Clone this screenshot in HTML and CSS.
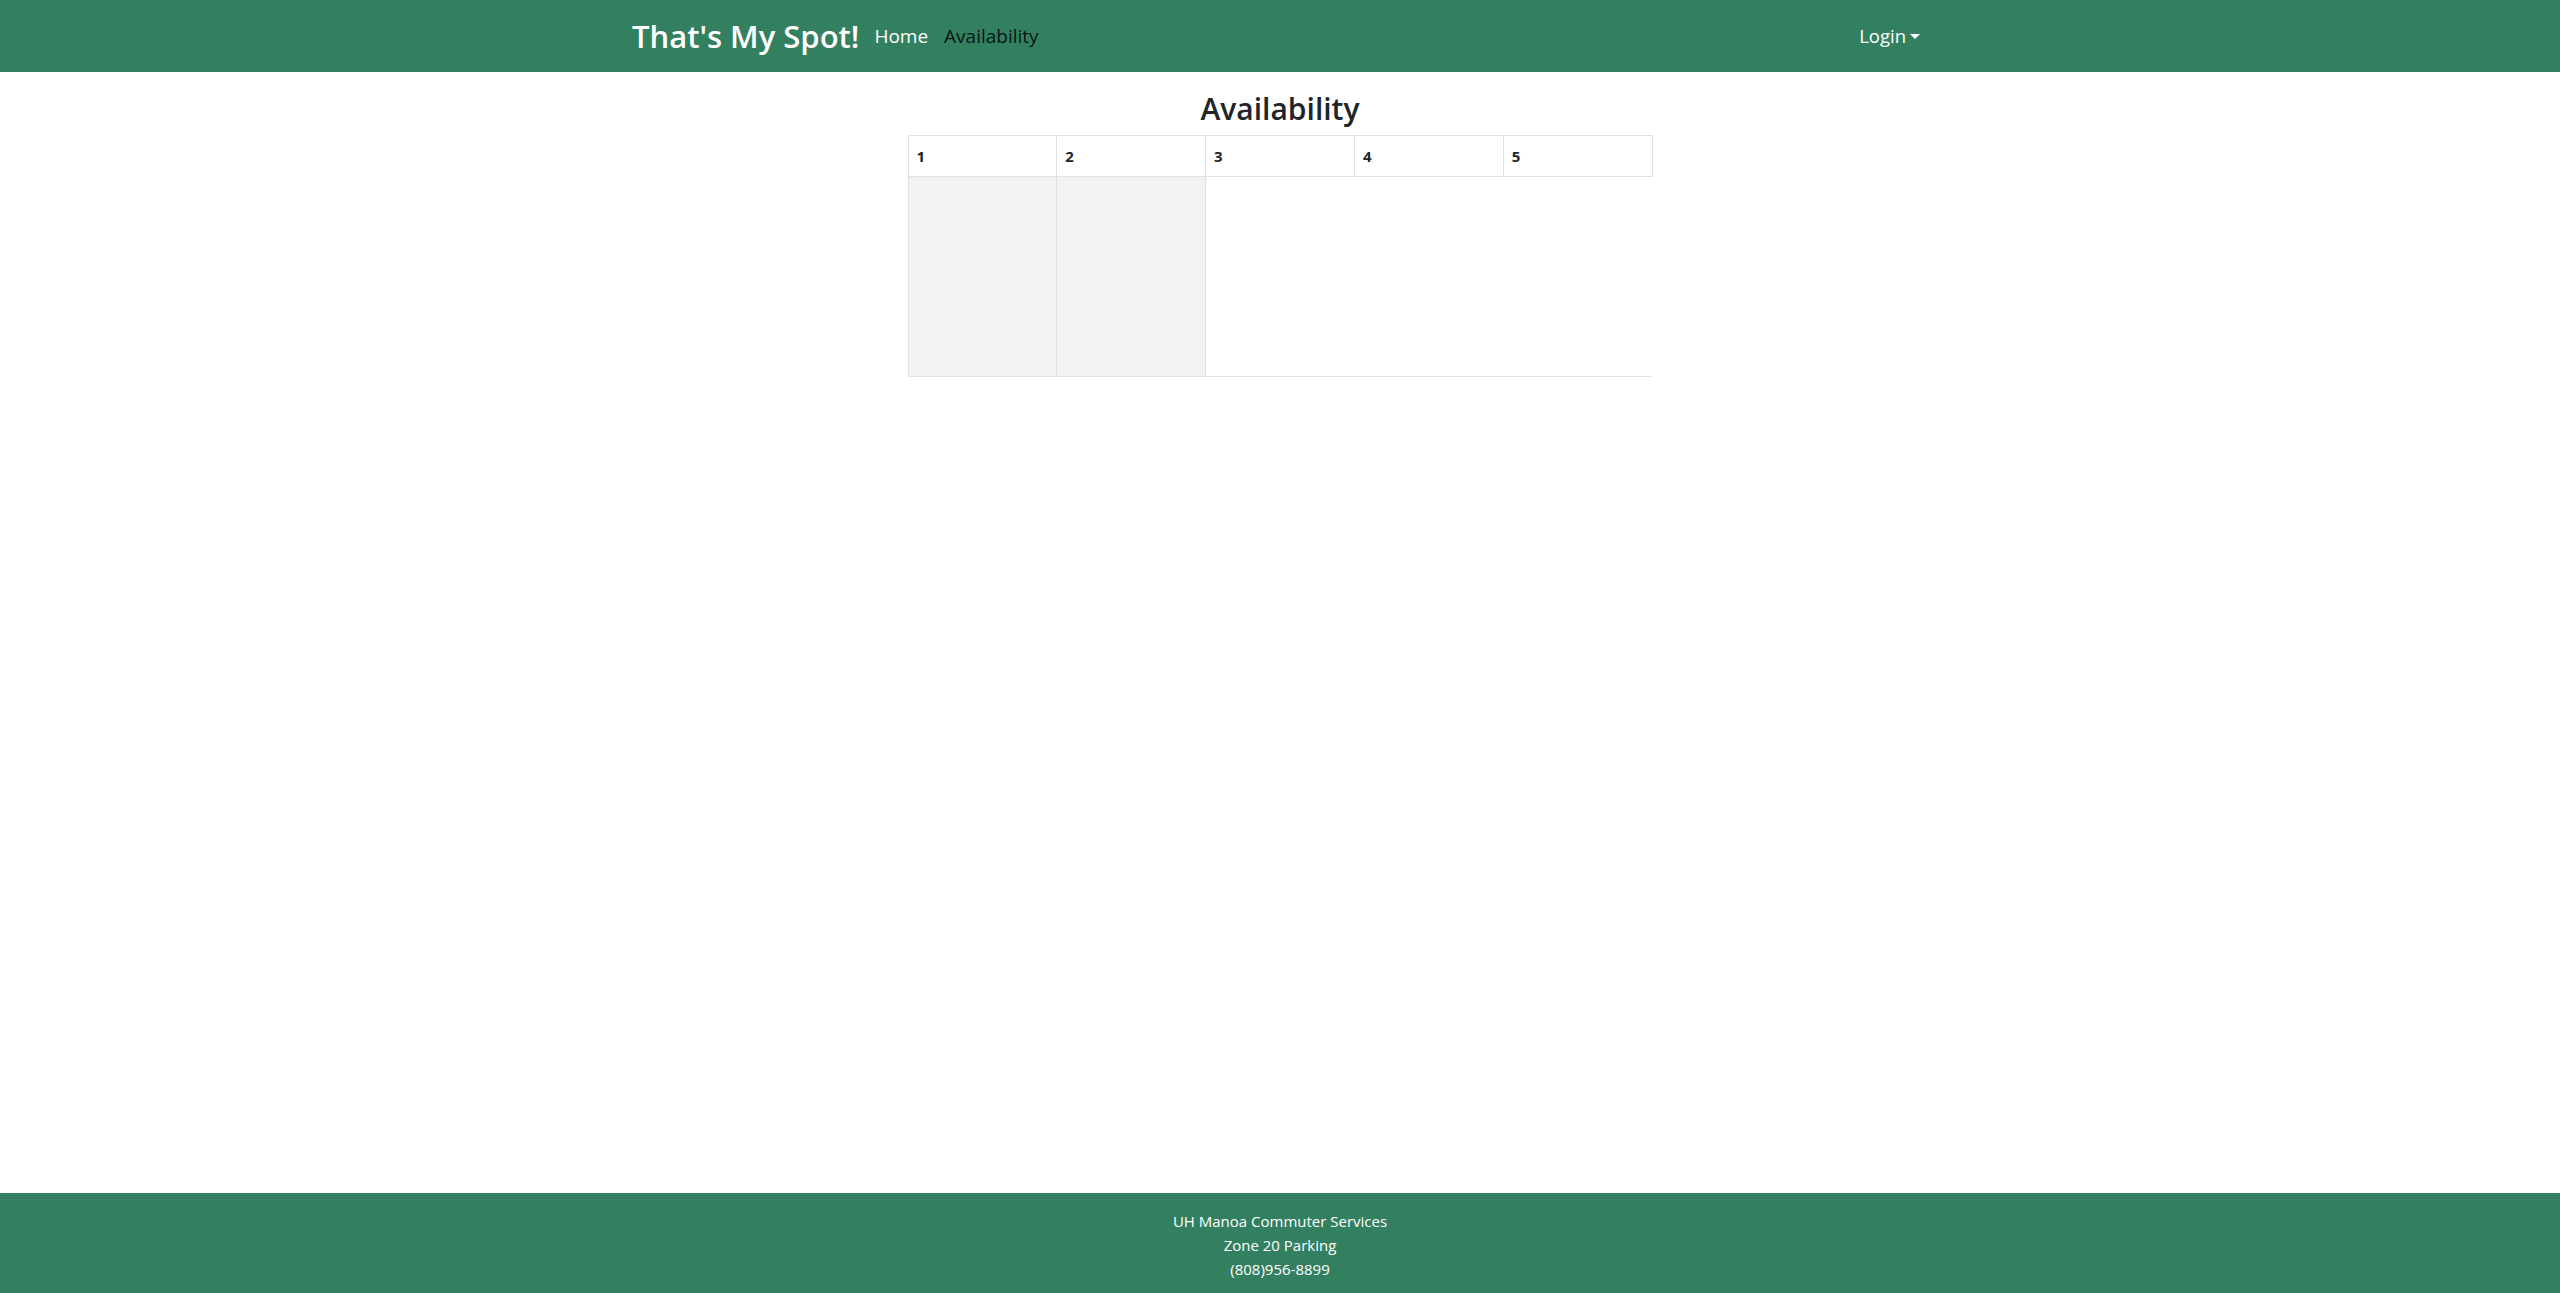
FILE: index.html
```html
<!DOCTYPE html>
<html lang="en">
<head>
<meta charset="utf-8">
<title>That's My Spot!</title>
<link rel="stylesheet" href="styles.css">
</head>
<body>
<nav class="navbar">
  <div class="nav-container">
    <a class="brand" href="#">That's My Spot!</a>
    <ul class="nav-links">
      <li><a class="nav-link" href="#">Home</a></li>
      <li><a class="nav-link active" href="#">Availability</a></li>
    </ul>
    <div class="nav-right">
      <a class="nav-link dropdown" href="#">Login<span class="caret"></span></a>
    </div>
  </div>
</nav>
<main class="main">
  <h2 class="title">Availability</h2>
  <table class="spots">
    <thead>
      <tr><th>1</th><th>2</th><th>3</th><th>4</th><th>5</th></tr>
    </thead>
    <tbody>
      <tr><td class="taken"></td><td class="taken"></td></tr>
    </tbody>
  </table>
</main>
<footer class="footer">
  <div>UH Manoa Commuter Services</div>
  <div>Zone 20 Parking</div>
  <div>(808)956-8899</div>
</footer>
</body>
</html>
```
FILE: styles.css
```css
html, body {
  margin: 0;
  padding: 0;
}
body {
  font-family: "Open Sans", "Noto Sans", sans-serif;
  color: #212529;
  min-height: 100vh;
  display: flex;
  flex-direction: column;
  background: #fff;
}
.navbar {
  background: #338060;
  height: 72px;
  display: flex;
  align-items: center;
}
.nav-container {
  width: 1320px;
  box-sizing: border-box;
  padding: 0 12px;
  margin: 0 auto;
  display: flex;
  align-items: center;
}
.brand {
  color: #fff;
  text-decoration: none;
  font-size: 31px;
  font-weight: 600;
  margin-right: 7px;
  line-height: 1.5;
}
.nav-links {
  list-style: none;
  margin: 0;
  padding: 0;
  display: flex;
  flex: 1;
}
.nav-link {
  display: block;
  padding: 8px 8px;
  color: #fff;
  text-decoration: none;
  font-size: 19px;
  line-height: 1.5;
}
.nav-link.active {
  color: rgba(0, 0, 0, 0.85);
}
.dropdown {
  display: flex;
  align-items: center;
  font-size: 18.5px;
}
.caret {
  display: inline-block;
  margin-left: 4px;
  width: 0;
  height: 0;
  border-top: 5px solid #fff;
  border-left: 5px solid transparent;
  border-right: 5px solid transparent;
}
.main {
  flex: 1;
  display: flex;
  flex-direction: column;
  align-items: center;
}
.title {
  font-size: 30px;
  font-weight: 600;
  line-height: 1.2;
  margin: 19px 0 8px;
}
.spots {
  width: 745px;
  border-collapse: collapse;
  table-layout: fixed;
}
.spots tr {
  border-top: 1px solid #dee2e6;
  border-bottom: 1px solid #dee2e6;
}
.spots th, .spots td {
  border-left: 1px solid #dee2e6;
  border-right: 1px solid #dee2e6;
  padding: 8px;
  text-align: left;
}
.spots th {
  font-size: 15px;
  font-weight: 700;
  line-height: 24px;
  color: #212529;
}
.spots td {
  height: 183px;
}
.spots td.taken {
  background: #f2f2f2;
}
.footer {
  background: #338060;
  color: #fff;
  text-align: center;
  font-size: 15px;
  line-height: 24px;
  padding: 16px 0 12px;
}
```
